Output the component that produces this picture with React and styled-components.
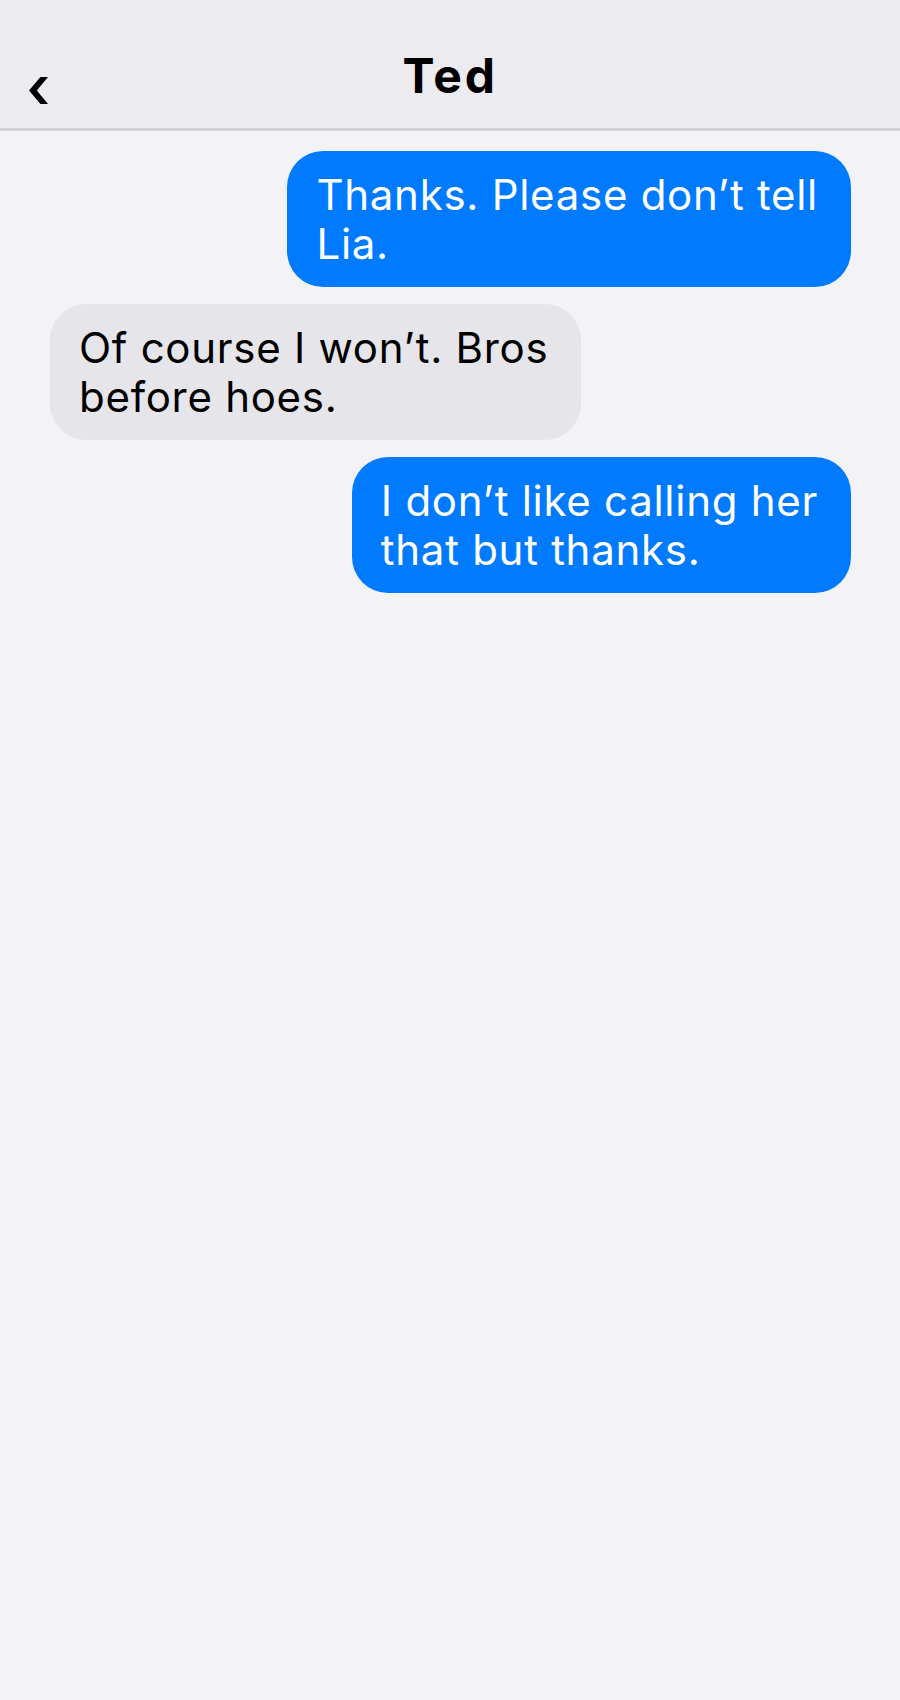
import React from "react";
import styled, { createGlobalStyle } from "styled-components";

const GlobalStyle = createGlobalStyle`
  html, body {
    margin: 0;
    padding: 0;
    background: #f2f2f7;
  }
  body {
    font-family: Inter, "Noto Sans", "Liberation Sans", sans-serif;
    -webkit-font-smoothing: antialiased;
  }
  * { box-sizing: border-box; }
`;

const Screen = styled.div`
  min-height: 1700px;
  background: #f2f2f7;
  display: flex;
  flex-direction: column;
`;

const NavBar = styled.header`
  height: 131px;
  background: #ebebf0;
  border-bottom: 3px solid #d1d1d6;
  display: grid;
  grid-template-columns: 1fr auto 1fr;
  align-items: start;
  padding-top: 52px;
`;

const BackButton = styled.button`
  justify-self: start;
  margin: 25px 0 0 29px;
  padding: 0;
  border: 0;
  background: none;
  width: 20px;
  height: 27px;
  display: flex;
  color: #000;
  cursor: pointer;
`;

const Title = styled.h1`
  margin: 0;
  font-size: 48px;
  line-height: 48px;
  font-weight: 700;
  color: #000;
  letter-spacing: 2.7px;
`;

const Thread = styled.main`
  display: flex;
  flex-direction: column;
  gap: 17px;
  padding: 20px 49px 20px 50px;
`;

const Bubble = styled.div`
  align-self: ${(p) => (p.$mine ? "flex-end" : "flex-start")};
  max-width: 620px;
  padding: 19px 33px 19px 29px;
  border-radius: 36px;
  background: ${(p) => (p.$mine ? "#007aff" : "#e5e5ea")};
  color: ${(p) => (p.$mine ? "#ffffff" : "#000000")};
  font-size: 42px;
  line-height: 49px;
  font-weight: 400;
  letter-spacing: 0.72px;
`;

const Line = styled.span`
  display: block;
  white-space: nowrap;
`;

const messages = [
  { id: 1, mine: true, lines: ["Thanks. Please don’t tell", "Lia."] },
  { id: 2, mine: false, lines: ["Of course I won’t. Bros", "before hoes."] },
  { id: 3, mine: true, lines: ["I don’t like calling her", "that but thanks."] },
];

function ChevronLeft() {
  return (
    <svg width="20" height="27" viewBox="0 0 20 27" aria-hidden="true">
      <polygon points="11.5,0 19,0 7.8,13.5 19,27 11.5,27 0,13.5" fill="currentColor" />
    </svg>
  );
}

export default function App() {
  return (
    <>
      <GlobalStyle />
      <Screen>
        <NavBar>
          <BackButton aria-label="Back">
            <ChevronLeft />
          </BackButton>
          <Title>Ted</Title>
          <span />
        </NavBar>
        <Thread>
          {messages.map((m) => (
            <Bubble key={m.id} $mine={m.mine}>
              {m.lines.map((line, i) => (
                <Line key={i}>{line}</Line>
              ))}
            </Bubble>
          ))}
        </Thread>
      </Screen>
    </>
  );
}
